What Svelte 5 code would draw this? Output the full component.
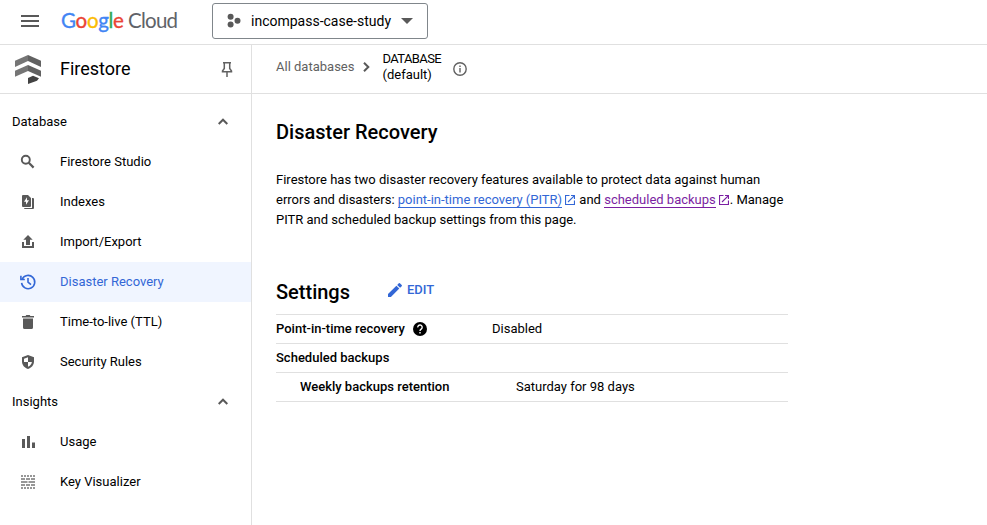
<script>
  const groups = [
    {
      title: 'Database',
      items: [
        { label: 'Firestore Studio', icon: 'search' },
        { label: 'Indexes', icon: 'indexes' },
        { label: 'Import/Export', icon: 'export' },
        { label: 'Disaster Recovery', icon: 'history', active: true },
        { label: 'Time-to-live (TTL)', icon: 'trash' },
        { label: 'Security Rules', icon: 'shield' }
      ]
    },
    {
      title: 'Insights',
      items: [
        { label: 'Usage', icon: 'bars' },
        { label: 'Key Visualizer', icon: 'keys' }
      ]
    }
  ];
  const letters = [
    ['G', '#4285f4'], ['o', '#ea4335'], ['o', '#fbbc04'],
    ['g', '#4285f4'], ['l', '#34a853'], ['e', '#ea4335']
  ];
</script>

{#snippet navIcon(name)}
  <svg class="nav-icon" width="18" height="18" viewBox="0 0 18 18" fill="currentColor">
    {#if name === 'search'}
      <circle cx="6.800" cy="6.800" r="4" fill="none" stroke="currentColor" stroke-width="1.900" />
      <path d="M9.800 9.800L14.600 14.600" stroke="currentColor" stroke-width="2.200" />
    {:else if name === 'indexes'}
      <path fill-rule="evenodd" d="M4 2h5l3 3v8a1 1 0 0 1-1 1H4a1 1 0 0 1-1-1V3a1 1 0 0 1 1-1zM8 4.300L5 8.700h2v3L10 7.300H8z" />
      <path d="M13 5h1a1 1 0 0 1 1 1V15a1 1 0 0 1-1 1H6a1 1 0 0 1-1-1h8z" />
    {:else if name === 'export'}
      <path d="M9 2l4.700 4.700H11V12H7V6.700H4.300zM3 9h2v4h8V9h2v6H3z" />
    {:else if name === 'history'}
      <path d="M3.200 6.200A6.600 6.600 0 1 1 2.600 9.800" fill="none" stroke="currentColor" stroke-width="1.600" />
      <path d="M1.900 2.800V6.500H5.800" fill="none" stroke="currentColor" stroke-width="1.600" />
      <path d="M9 5v4.200l3 2.400" fill="none" stroke="currentColor" stroke-width="1.600" />
    {:else if name === 'trash'}
      <path d="M3 3h3.600l.7-1h3.400l.7 1H15v1.500H3zM4 5.500h10V14.500a1.500 1.500 0 0 1-1.500 1.500h-7A1.500 1.500 0 0 1 4 14.500z" />
    {:else if name === 'shield'}
      <path fill-rule="evenodd" d="M9 2l6 2.200v4.300c0 3.500-2.500 6.400-6 7.500-3.500-1.100-6-4-6-7.500V4.200zM9 4.300L5 5.800V9H9zM9 9v4.800c2.200-.9 3.600-2.700 3.900-4.800z" />
    {:else if name === 'bars'}
      <path d="M3 6h3v9H3zM8 3h3v12H8zM13 9.500h3V15h-3z" />
    {:else}
      <g stroke="#757575" stroke-width="1.700">
        <path d="M2 3h14M2 15h14" stroke-dasharray="2 1" />
        <path d="M2 6h14M2 12h14" stroke-dasharray="4 1" />
        <path d="M2 9h14" stroke-dasharray="6.500 1" />
      </g>
    {/if}
  </svg>
{/snippet}

{#snippet external()}
  <svg class="ext" width="10" height="10" viewBox="0 0 10 10" fill="none" stroke="currentColor" stroke-width="1.100">
    <path d="M4.500 .55H.55v8.900h8.900V5.500M6 .55h3.450V4M9.450 .55L3 7" />
  </svg>
{/snippet}

<div class="app">
  <header class="topbar">
    <svg class="menu" width="18" height="12" viewBox="0 0 18 12" fill="#595959"><path d="M0 0h18v2H0zM0 5h18v2H0zM0 10h18v2H0z" /></svg>
    <div class="logo" aria-label="Google Cloud">
      <span class="google">{#each letters as [letter, color]}<span style="color:{color}">{letter}</span>{/each}</span><span class="cloud">Cloud</span>
    </div>
    <button class="project">
      <svg width="14" height="16" viewBox="0 0 14 16" fill="#595959"><circle cx="3.600" cy="3.700" r="3" /><circle cx="3.600" cy="11.600" r="3" /><circle cx="10.500" cy="7.700" r="3" /></svg>
      <span>incompass-case-study</span>
      <svg class="caret" width="12" height="6" viewBox="0 0 12 6" fill="#595959"><path d="M0 0h12L6 6z" /></svg>
    </button>
  </header>

  <div class="body">
    <aside>
      <div class="product">
        <svg width="26" height="29" viewBox="0 0 26 29">
          <path d="M0 5.700L13 0v6L0 12z" fill="#757575" /><path d="M26 5.700L13 0v6L26 12z" fill="#616161" />
          <path d="M0 15.700L13 10v6L0 21.700z" fill="#757575" /><path d="M26 15.700L13 10v6L26 21.700z" fill="#616161" />
          <path d="M13 23l5-2.300 6 2.500-2 2.500L13 29z" fill="#424242" />
        </svg>
        <h2>Firestore</h2>
        <svg class="pin" width="12" height="15" viewBox="0 0 12 15" fill="none" stroke="#616161" stroke-width="1.500"><path d="M2 .8h8M3.300 1v5.500L1.500 9v.7h9V9L8.700 6.500V1M6 10v5" /></svg>
      </div>
      <nav>
        {#each groups as group}
          <div class="group">
            <span>{group.title}</span>
            <svg width="10" height="7" viewBox="0 0 10 7" fill="none" stroke="#595959" stroke-width="2"><path d="M.7 6L5 1.700 9.300 6" /></svg>
          </div>
          {#each group.items as item}
            <div class="item" class:active={item.active}>
              {@render navIcon(item.icon)}
              <span>{item.label}</span>
            </div>
          {/each}
        {/each}
      </nav>
    </aside>

    <main>
      <div class="crumbs">
        <span class="all">All databases</span>
        <svg class="chev" width="7" height="10" viewBox="0 0 7 10" fill="none" stroke="#595959" stroke-width="2"><path d="M1 .8L5.300 5 1 9.200" /></svg>
        <div class="db"><span>DATABASE</span><br />(default)</div>
        <svg class="info" width="14" height="14" viewBox="0 0 14 14"><circle cx="7" cy="7" r="6.200" fill="none" stroke="#616161" stroke-width="1.400" /><path d="M6.300 6h1.400v4.500H6.300zM6.300 3.500h1.400v1.400H6.300z" fill="#616161" /></svg>
      </div>
      <section class="content">
        <h1>Disaster Recovery</h1>
        <p>
          Firestore has two disaster recovery features available to protect data against human<br />
          errors and disasters: <a class="pitr"><span>point-in-time recovery (PITR)</span>{@render external()}</a> and <a class="backups"><span>scheduled backups</span>{@render external()}</a>. Manage<br />
          PITR and scheduled backup settings from this page.
        </p>
        <div class="settings">
          <h1>Settings</h1>
          <button class="edit">
            <svg width="14" height="14" viewBox="0 0 14 14" fill="currentColor"><path d="M0 11.100V14h2.900l8.400-8.400-2.900-2.900zM13.700 3.200a.8.8 0 0 0 0-1.100L11.900.3a.8.8 0 0 0-1.100 0L9.200 1.900l2.900 2.900z" /></svg>
            EDIT
          </button>
        </div>
        <div class="table">
          <div class="row">
            <b>Point-in-time recovery
              <svg width="14" height="14" viewBox="0 0 14 14"><circle cx="7" cy="7" r="7" fill="#000" /><path d="M4.800 5.400a2.200 2.200 0 1 1 3.600 1.500C7.500 7.600 7 8 7 9" fill="none" stroke="#fff" stroke-width="1.400" /><path d="M6.300 10.100h1.400v1.400H6.300z" fill="#fff" /></svg>
            </b>
            <span>Disabled</span>
          </div>
          <div class="row"><b>Scheduled backups</b></div>
          <div class="row nested"><b>Weekly backups retention</b><span>Saturday for 98 days</span></div>
        </div>
      </section>
    </main>
  </div>
</div>

<style>
  .app { height: 525px; display: flex; flex-direction: column; overflow: hidden; background: #fff; color: #000; font: 13px/20px Roboto, sans-serif; }
  .app * { box-sizing: border-box; }
  svg { flex: none; display: block; }
  h1, h2, p { margin: 0; }
  button { font: inherit; color: inherit; background: none; border: 0; padding: 0; }
  .topbar { height: 45px; flex: none; display: flex; border-bottom: 1px solid #e0e0e0; }
  .menu { margin: 15px 0 0 21px; }
  .logo { display: flex; width: 117px; margin: 7px 0 0 22px; white-space: nowrap; font: 20.500px/26px Lato, sans-serif; letter-spacing: -.3px; }
  .google { width: 67px; -webkit-text-stroke: .35px; }
  .cloud { color: #5f6368; letter-spacing: -.75px; }
  .project { display: flex; align-items: center; width: 216px; height: 36px; margin: 3px 0 0 34px; padding: 0 14px; border: 1px solid #80868b; border-radius: 3px; font-size: 14px; }
  .project span { margin: -1px 0 0 10px; white-space: nowrap; }
  .caret { margin-left: auto; }
  .body { flex: 1; display: flex; min-height: 0; }
  aside { width: 252px; flex: none; border-right: 1px solid #e0e0e0; }
  .product { height: 49px; display: flex; align-items: center; padding: 0 18px 0 15px; border-bottom: 1px solid #e0e0e0; }
  .product h2 { margin-left: 19px; font-size: 18px; font-weight: 400; }
  .pin { margin-left: auto; }
  nav { padding-top: 8px; }
  .group, .item { height: 40px; display: flex; align-items: center; }
  .group { justify-content: space-between; padding: 0 23px 0 12px; }
  .group svg { margin-bottom: 1px; }
  .item { padding-left: 19px; }
  .item span { margin-left: 23px; padding-bottom: 1px; }
  .nav-icon { color: #595959; }
  .active { background: #f0f5ff; color: #3367d6; }
  .active .nav-icon { color: #3367d6; }
  main { flex: 1; }
  .crumbs { height: 49px; display: flex; padding-left: 24px; border-bottom: 1px solid #e0e0e0; }
  .all { margin-top: 12px; color: #616161; }
  .chev { margin: 17px 0 0 9px; }
  .db { width: 59px; margin: 6px 0 0 12px; line-height: 16px; }
  .db span { letter-spacing: -.6px; }
  .info { margin: 17px 0 0 12px; }
  .content { width: 536px; padding: 24px 0 0 24px; }
  h1 { font-size: 20px; font-weight: 500; line-height: 28px; }
  p { margin-top: 24px; white-space: nowrap; }
  a { color: #3367d6; }
  a span { border-bottom: 1px solid; }
  .backups { color: #7b1fa2; }
  .ext { display: inline-block; vertical-align: -1px; margin: 0 1px 0 3px; }
  .settings { display: flex; margin-top: 48px; }
  .edit { display: flex; align-items: center; gap: 5px; height: 24px; margin-left: 38px; color: #3367d6; font-weight: 500; }
  .table { margin-top: 8px; border-top: 1px solid #e0e0e0; }
  .row { display: flex; height: 29px; padding-top: 4px; border-bottom: 1px solid #e0e0e0; }
  .row b { display: flex; align-items: center; gap: 8px; width: 216px; height: 20px; font-weight: 500; }
  .nested { padding-left: 24px; }
</style>
